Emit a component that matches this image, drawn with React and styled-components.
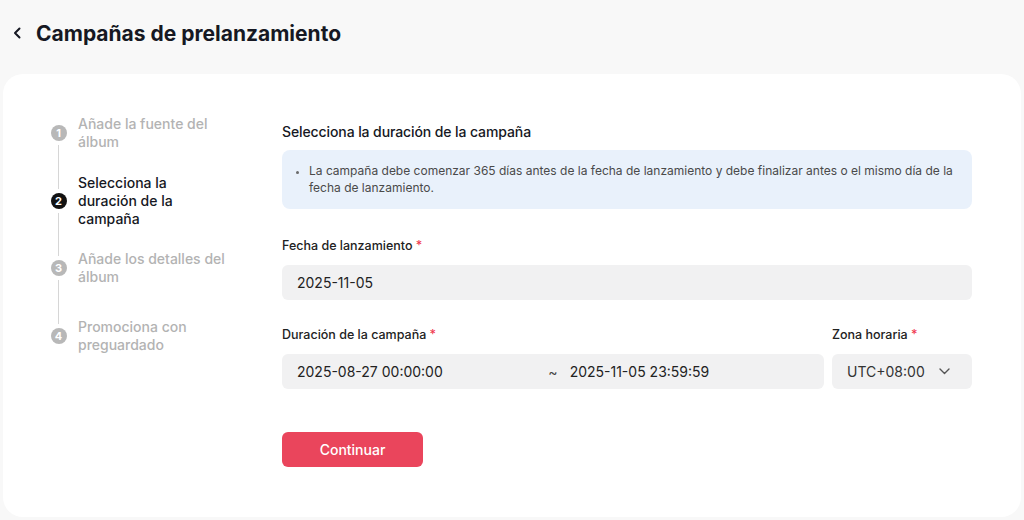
import React from "react";
import styled, { createGlobalStyle } from "styled-components";

const Global = createGlobalStyle`
  html, body { margin: 0; padding: 0; background: #f8f8f8; }
  body { font-family: Inter, "Noto Sans", sans-serif; color: #161823; -webkit-font-smoothing: antialiased; }
  * { box-sizing: border-box; }
`;

const Page = styled.div`
  width: 1024px;
  height: 520px;
  overflow: hidden;
  padding: 0 3px 3px;
  display: flex;
  flex-direction: column;
`;

const Header = styled.div`
  height: 74px;
  display: flex;
  align-items: center;
  gap: 12px;
  padding: 0 0 8px 7px;
`;

const BackBtn = styled.button`
  border: 0;
  background: none;
  padding: 0;
  width: 14px;
  height: 20px;
  display: flex;
  align-items: center;
  justify-content: center;
  color: #161823;
  cursor: pointer;
`;

const Title = styled.h1`
  margin: 0;
  font-size: 21px;
  font-weight: 700;
  letter-spacing: 0;
  color: #161823;
`;

const Card = styled.div`
  flex: 1;
  background: #ffffff;
  border-radius: 20px;
  padding: 29px 49px 0 48px;
  display: grid;
  grid-template-columns: 198px 1fr;
  column-gap: 33px;
  align-items: start;
`;

const Stepper = styled.ol`
  list-style: none;
  margin: 0;
  padding: 0;
  display: flex;
  flex-direction: column;
`;

const Step = styled.li`
  display: flex;
  align-items: stretch;
  gap: 12px;
`;

const Marker = styled.div`
  width: 15px;
  flex: none;
  display: flex;
  flex-direction: column;
  align-items: center;
`;

const Line = styled.span`
  flex: 1;
  width: 1px;
  background: ${p => (p.$hidden ? "transparent" : "#d6d6d6")};
`;

const Dot = styled.span`
  width: 16px;
  height: 16px;
  border-radius: 50%;
  margin: 4px 0;
  flex: none;
  background: ${p => (p.$active ? "#121212" : "#b8b8b8")};
  color: #fff;
  font-size: 11px;
  font-weight: 700;
  display: flex;
  align-items: center;
  justify-content: center;
  line-height: 1;
`;

const StepLabel = styled.span`
  max-width: 150px;
  padding: ${p => p.$pad}px 0;
  font-size: 14px;
  line-height: 18px;
  font-weight: 500;
  color: ${p => (p.$active ? "#161823" : "#b3b3b3")};
`;

const Content = styled.div`
  padding-top: 20px;
  display: flex;
  flex-direction: column;
`;

const Heading = styled.h2`
  margin: 0;
  font-size: 14px;
  line-height: 18px;
  font-weight: 500;
  letter-spacing: -0.1px;
  color: #161823;
`;

const Notice = styled.ul`
  margin: 9px 0 0;
  padding: 12px 16px 13px 27px;
  background: #e9f1fb;
  border-radius: 8px;
  font-size: 12px;
  line-height: 17px;
  color: #4a4a4a;
  list-style: disc;
  li::marker { color: #6a6a6a; font-size: 10px; }
`;

const Field = styled.div`
  display: flex;
  flex-direction: column;
  gap: 10px;
  flex: ${p => (p.$grow ? 1 : "none")};
  width: ${p => p.$width || "auto"};
  margin-top: ${p => p.$top || 0}px;
`;

const Label = styled.label`
  font-size: 12.5px;
  line-height: 18px;
  font-weight: 500;
  color: #222;
  &::after {
    content: " *";
    color: #f0384f;
  }
`;

const InputBox = styled.div`
  height: 35px;
  border-radius: 6px;
  background: #f1f1f2;
  display: flex;
  align-items: center;
  padding: 0 15px;
  font-size: 14px;
  color: #222;
`;

const RangeBox = styled(InputBox)`
  display: grid;
  grid-template-columns: 1fr auto 1fr;
`;

const Tilde = styled.span`
  margin: 0 12px;
  color: #444;
  font-size: 14px;
`;

const SelectBox = styled(InputBox)`
  justify-content: space-between;
  padding-right: 22px;
  color: #333;
`;

const Row = styled.div`
  display: flex;
  gap: 8px;
  margin-top: 26px;
`;

const Button = styled.button`
  margin-top: 43px;
  width: 141px;
  height: 35px;
  border: 0;
  border-radius: 6px;
  background: #ea455c;
  color: #fff;
  font-family: inherit;
  font-size: 14px;
  font-weight: 500;
  cursor: pointer;
`;

const steps = [
  { n: 1, text: "Añade la fuente del álbum", pad: 12 },
  { n: 2, text: "Selecciona la duración de la campaña", pad: 11, active: true },
  { n: 3, text: "Añade los detalles del álbum", pad: 11 },
  { n: 4, text: "Promociona con preguardado", pad: 21 },
];

const BackIcon = () => (
  <svg width="9" height="12" viewBox="0 0 9 12" fill="none">
    <path d="M6.5 1.5L2 6l4.5 4.5" stroke="currentColor" strokeWidth="2" strokeLinecap="round" strokeLinejoin="round" />
  </svg>
);

const Down = () => (
  <svg width="11" height="7" viewBox="0 0 11 7" fill="none">
    <path d="M1 1l4.5 4.5L10 1" stroke="#555" strokeWidth="1.4" strokeLinecap="round" strokeLinejoin="round" />
  </svg>
);

export default function App() {
  return (
    <>
      <Global />
      <Page>
        <Header>
          <BackBtn aria-label="Atrás">
            <BackIcon />
          </BackBtn>
          <Title>Campañas de prelanzamiento</Title>
        </Header>
        <Card>
          <Stepper>
            {steps.map((s, i) => (
              <Step key={s.n}>
                <Marker>
                  <Line $hidden={i === 0} />
                  <Dot $active={s.active}>{s.n}</Dot>
                  <Line $hidden={i === steps.length - 1} />
                </Marker>
                <StepLabel $pad={s.pad} $active={s.active}>{s.text}</StepLabel>
              </Step>
            ))}
          </Stepper>
          <Content>
            <Heading>Selecciona la duración de la campaña</Heading>
            <Notice>
              <li>
                La campaña debe comenzar 365 días antes de la fecha de lanzamiento y debe finalizar antes o el mismo día de la fecha de lanzamiento.
              </li>
            </Notice>
            <Field $top={28}>
              <Label>Fecha de lanzamiento</Label>
              <InputBox>2025-11-05</InputBox>
            </Field>
            <Row>
              <Field $grow>
                <Label>Duración de la campaña</Label>
                <RangeBox>
                  <span>2025-08-27 00:00:00</span>
                  <Tilde>~</Tilde>
                  <span>2025-11-05 23:59:59</span>
                </RangeBox>
              </Field>
              <Field $width="140px">
                <Label>Zona horaria</Label>
                <SelectBox>
                  <span>UTC+08:00</span>
                  <Down />
                </SelectBox>
              </Field>
            </Row>
            <div>
              <Button>Continuar</Button>
            </div>
          </Content>
        </Card>
      </Page>
    </>
  );
}
